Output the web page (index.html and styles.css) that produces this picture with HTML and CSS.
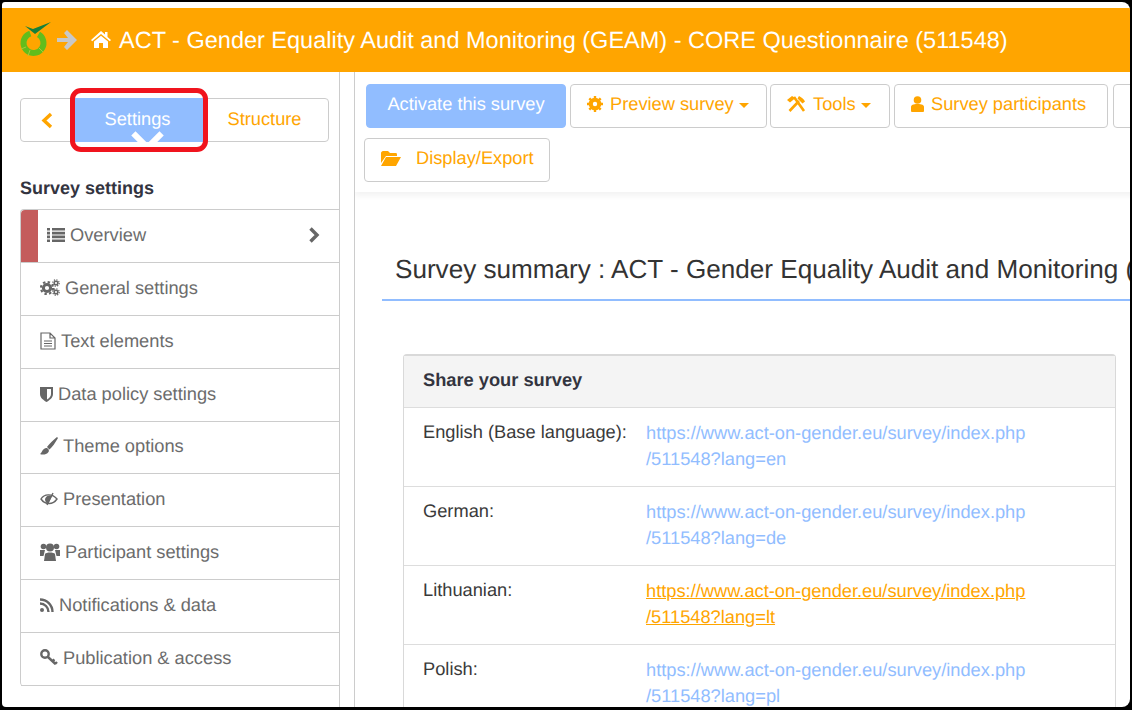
FILE: index.html
```html
<!DOCTYPE html>
<html>
    <head>
        <title>Survey summary</title>
        <link rel="stylesheet" href="styles.css">
    </head>
    <body>
        <div class="window">
            <header class="topbar">
                <svg class="logo" viewBox="0 0 32 36" width="32" height="36">
                    <circle cx="14.500" cy="21" r="10" fill="none" stroke="#62bd1c" stroke-width="6" stroke-dasharray="54 8.800" transform="rotate(-60 14.500 21)"/>
                    <path d="M2 27 L7 25 M9 34 L11 28 M24 30 L20 26" stroke="#a8c83a" stroke-width="1"/>
                    <path d="M6 4 L14 7 L32 0 L16 12 Z" fill="#17803a"/>
                </svg>
                <svg class="arrow" viewBox="0 0 20 20" width="20" height="20">
                    <path d="M0 8 H11 L7 3 L10 0 L20 10 L10 20 L7 17 L11 12 H0 Z" fill="#c8c8c8"/>
                </svg>
                <svg class="home" viewBox="0 0 20 18" width="20" height="18">
                    <path d="M10 0 L14 3.500 V1 H16.500 V6 L20 9 L18.800 10.300 L10 3 L1.200 10.300 L0 9 Z M3 10.500 L10 4.800 L17 10.500 V17 H12 V12 H8 V17 H3 Z" fill="#fff"/>
                </svg>
                <span class="title">ACT - Gender Equality Audit and Monitoring (GEAM) - CORE Questionnaire (511548)</span>
            </header>
            <div class="main">
                <aside class="sidebar">
                    <div class="tabs">
                        <a class="tab-back">
                            <svg viewBox="0 0 12 17" width="12" height="17"><path d="M10 2 L3 8.500 L10 15" fill="none" stroke="#ffa500" stroke-width="3.400"/></svg>
                        </a>
                        <a class="tab-settings">Settings<i class="notch"></i></a>
                        <a class="tab-structure">Structure</a>
                        <span class="highlight"></span>
                    </div>
                    <h2 class="side-title">Survey settings</h2>
                    <ul class="side-menu">
                        <li class="active">
                            <span class="marker"></span>
                            <svg class="ico" viewBox="0 0 18 16" width="18" height="16"><path d="M0 1h3v2.600H0zM5 1h13v2.600H5zM0 4.800h3v2.600H0zM5 4.800h13v2.600H5zM0 8.600h3v2.600H0zM5 8.600h13v2.600H5zM0 12.400h3v2.600H0zM5 12.400h13v2.600H5z" fill="#666"/></svg>
                            Overview
                            <svg class="chev" viewBox="0 0 12 16" width="12" height="16"><path d="M2.500 1.500 L9 8 L2.500 14.500" fill="none" stroke="#666" stroke-width="3.400"/></svg>
                        </li>
                        <li>
                            <svg class="ico" viewBox="0 0 20 17" width="20" height="17"><circle cx="7" cy="9" r="3.600" fill="none" stroke="#666" stroke-width="3"/><circle cx="7" cy="9" r="6" fill="none" stroke="#666" stroke-width="2.200" stroke-dasharray="2.400 2.300"/><circle cx="16" cy="4" r="1.800" fill="none" stroke="#666" stroke-width="1.500"/><circle cx="16" cy="4" r="3.200" fill="none" stroke="#666" stroke-width="1.200" stroke-dasharray="1.300 1.200"/><circle cx="16" cy="13" r="1.800" fill="none" stroke="#666" stroke-width="1.500"/><circle cx="16" cy="13" r="3.200" fill="none" stroke="#666" stroke-width="1.200" stroke-dasharray="1.300 1.200"/></svg>
                            General settings
                        </li>
                        <li>
                            <svg class="ico" viewBox="0 0 16 18" width="16" height="18"><path d="M1 1 H10 L15 6 V17 H1 Z M10 1 V6 H15 M4 9 H12 M4 11.500 H12 M4 14 H12" fill="none" stroke="#666" stroke-width="1.200"/></svg>
                            Text elements
                        </li>
                        <li>
                            <svg class="ico" viewBox="0 0 13 16" width="13" height="16"><path d="M0 1 H13 V8 C13 12 9 14.500 6.500 16 C4 14.500 0 12 0 8 Z" fill="#666"/><path d="M7 3 H11 V8 C11 10.500 9 12.300 7 13.500 Z" fill="#fff"/></svg>
                            Data policy settings
                        </li>
                        <li>
                            <svg class="ico" viewBox="0 0 18 18" width="18" height="18"><path d="M17 0 L18 1 C15 6 12.500 10 9.500 12.500 L7 10 C9.500 7 13 3 17 0 Z M6 11 C8.500 11 9.500 13.500 8.500 15 C6.500 18 2 18 0 17 C2 16 2 12 6 11 Z" fill="#666"/></svg>
                            Theme options
                        </li>
                        <li>
                            <svg class="ico" viewBox="0 0 18 14" width="18" height="14"><path d="M1 7 C4 2 12 1 17 7 C13 13 5 13 1 7 Z" fill="none" stroke="#666" stroke-width="1.400"/><path d="M5 7 C6 3 10 3 12 4 L8 12 C6 11 5 9 5 7 Z" fill="#666"/><path d="M13 1 L7 13" stroke="#666" stroke-width="1.400"/></svg>
                            Presentation
                        </li>
                        <li>
                            <svg class="ico" viewBox="0 0 20 18" width="20" height="18"><circle cx="10" cy="4.500" r="4" fill="#666"/><circle cx="3.500" cy="3.500" r="2.800" fill="#666"/><circle cx="16.500" cy="3.500" r="2.800" fill="#666"/><path d="M5 11 C6 9 14 9 15 11 L16 18 H4 Z" fill="#666"/><path d="M0 7 H5 L3.500 13 H0 Z M15 7 H20 V13 H16.500 Z" fill="#666"/></svg>
                            Participant settings
                        </li>
                        <li>
                            <svg class="ico" viewBox="0 0 14 14" width="14" height="14"><circle cx="2" cy="12" r="2" fill="#666"/><path d="M0 5.500 A8.500 8.500 0 0 1 8.500 14 M0 1.500 A12.500 12.500 0 0 1 12.500 14" fill="none" stroke="#666" stroke-width="2.400"/></svg>
                            Notifications &amp; data
                        </li>
                        <li>
                            <svg class="ico" viewBox="0 0 18 17" width="18" height="17"><circle cx="5" cy="5" r="3.700" fill="none" stroke="#666" stroke-width="2.400"/><path d="M8 8 L15.500 15 M12.500 12 L14.500 10.500 M15 15 L17 13" fill="none" stroke="#666" stroke-width="2.400"/></svg>
                            Publication &amp; access
                        </li>
                    </ul>
                </aside>
                <section class="content">
                    <div class="toolbar">
                        <a class="btn btn-primary">Activate this survey</a>
                        <a class="btn btn-preview">
                            <svg viewBox="0 0 16 16" width="16" height="16"><circle cx="8" cy="8" r="4.500" fill="none" stroke="#ffa500" stroke-width="3.600"/><path d="M8 0V16M0 8H16M2.300 2.300L13.700 13.700M13.700 2.300L2.300 13.700" stroke="#ffa500" stroke-width="2.400"/><circle cx="8" cy="8" r="2.200" fill="#fff"/></svg>
                            Preview survey <i class="caret"></i>
                        </a>
                        <a class="btn btn-tools">
                            <svg viewBox="0 0 19 17" width="19" height="17"><path d="M2.500 15 L12 5 M7 1 L17 15" fill="none" stroke="#ffa500" stroke-width="2.600"/><path d="M0 4 L5 0 L8.500 2 L3 6.500 Z M12 0 C14 1 17 3 18 5.500 L15.500 7.500 L10.500 2.500 Z" fill="#ffa500"/></svg>
                            Tools <i class="caret"></i>
                        </a>
                        <a class="btn btn-users">
                            <svg viewBox="0 0 13 16" width="13" height="16"><circle cx="6.500" cy="4" r="3.800" fill="#ffa500"/><path d="M0 15 V11 C0 9 2 8 6.500 8 C11 8 13 9 13 11 V15 C13 16 12 16 11 16 H2 C1 16 0 16 0 15 Z" fill="#ffa500"/></svg>
                            Survey participants
                        </a>
                        <a class="btn btn-cut"></a>
                        <a class="btn btn-export">
                            <svg viewBox="0 0 20 15" width="20" height="15"><path d="M0 2 C0 1 1 0 2 0 H7 L9 2 H15 C16 2 16 3 16 5 H5 L0 12 Z M5 6 H20 L15 15 H0 Z" fill="#ffa500"/></svg>
                            Display/Export
                        </a>
                    </div>
                    <h1 class="page-title"><span>Survey summary : ACT - Gender Equality Audit and Monitoring (GEAM) - CORE Questionnaire</span></h1>
                    <div class="panel">
                        <div class="panel-head">Share your survey</div>
                        <div class="row">
                            <div class="lang">English (Base language):</div>
                            <div class="link"><a>https://www.act-on-gender.eu/survey/index.php<br>/511548?lang=en</a></div>
                        </div>
                        <div class="row">
                            <div class="lang">German:</div>
                            <div class="link"><a>https://www.act-on-gender.eu/survey/index.php<br>/511548?lang=de</a></div>
                        </div>
                        <div class="row">
                            <div class="lang">Lithuanian:</div>
                            <div class="link"><a class="hover">https://www.act-on-gender.eu/survey/index.php<br>/511548?lang=lt</a></div>
                        </div>
                        <div class="row">
                            <div class="lang">Polish:</div>
                            <div class="link"><a>https://www.act-on-gender.eu/survey/index.php<br>/511548?lang=pl</a></div>
                        </div>
                    </div>
                </section>
            </div>
        </div>
    </body>
</html>
```

FILE: styles.css
```css
html, body {
    margin: 0;
    height: 100%;
    background-color: #000;
    overflow: hidden;
}
body {
    font-family: "Liberation Sans", Arial, sans-serif;
    font-size: 18.25px;
    text-rendering: geometricPrecision;
    padding: 2px 2px 3px 2px;
    box-sizing: border-box;
}
.window {
    height: 100%;
    background-color: #fff;
    border-radius: 3px 8px 8px 4px;
    overflow: hidden;
    padding-top: 6px;
    box-sizing: border-box;
    display: flex;
    flex-direction: column;
}
.topbar {
    background-color: #ffa500;
    height: 64px;
    flex: none;
    display: flex;
    align-items: center;
    color: #fff;
    padding-left: 17px;
}
.logo {
    margin-right: 6px;
}
.arrow {
    margin-right: 14px;
}
.home {
    margin-right: 8px;
}
.title {
    font-size: 23.5px;
    white-space: nowrap;
}
.main {
    flex: 1;
    display: flex;
    min-height: 0;
}
.sidebar {
    width: 338px;
    flex: none;
    box-sizing: border-box;
    padding: 26px 0 0 18px;
    border-right: 1px solid #ccc;
    color: #666;
}
.tabs {
    position: relative;
    display: flex;
    height: 44px;
    width: 309px;
    box-sizing: border-box;
    border: 1px solid #ccc;
    border-radius: 4px;
}
.tabs a {
    display: flex;
    align-items: center;
    justify-content: center;
}
.tab-back {
    width: 53px;
    padding-right: 2px;
    box-sizing: border-box;
}
.tab-settings {
    position: relative;
    width: 129px;
    box-sizing: border-box;
    padding: 0 2px 2px 0;
    background-color: #91bdff;
    color: #fff;
    margin-top: -1px;
    margin-bottom: -1px;
}
.tab-structure {
    flex: 1;
    padding: 0 2px 2px 0;
    color: #ffa500;
}
.notch {
    position: absolute;
    left: 62px;
    bottom: -5px;
    width: 23px;
    height: 23px;
    box-sizing: border-box;
    border-right: 6px solid #fff;
    border-bottom: 6px solid #fff;
    transform: rotate(45deg);
}
.highlight {
    position: absolute;
    left: 49px;
    top: -11px;
    width: 138px;
    height: 64px;
    box-sizing: border-box;
    border: 5px solid #f0141e;
    border-radius: 11px;
}
.side-title {
    margin: 36px 0 11px 0;
    font-size: 18px;
    line-height: 20px;
    color: #33343f;
}
.side-menu {
    list-style-type: none;
    margin: 0;
    padding: 0;
    border-top: 1px solid #ccc;
    border-left: 1px solid #ccc;
    border-radius: 4px 0 0 4px;
}
.side-menu li {
    display: flex;
    align-items: center;
    gap: 5px;
    height: 52.875px;
    box-sizing: border-box;
    padding: 0 0 2px 19px;
    border-bottom: 1px solid #ccc;
    color: #6c6c6c;
    white-space: nowrap;
}
.side-menu li.active {
    position: relative;
    padding-left: 26px;
}
.marker {
    position: absolute;
    left: 0;
    top: 0;
    bottom: 0;
    width: 17px;
    background-color: #c45c5c;
    border-top-left-radius: 4px;
}
.chev {
    margin-left: auto;
    margin-right: 19px;
}
.content {
    flex: 1;
    min-width: 0;
    overflow: hidden;
    margin-left: 14px;
    border-left: 1px solid #ccc;
}
.toolbar {
    display: flex;
    flex-wrap: wrap;
    align-content: flex-start;
    gap: 10px 4px;
    height: 108px;
    padding: 12px 0 0 9px;
    width: 790px;
    box-shadow: 0 4px 6px rgba(0, 0, 0, 0.05);
}
.btn {
    display: flex;
    align-items: center;
    gap: 7px;
    height: 44px;
    box-sizing: border-box;
    padding: 0 0 4px 16px;
    border: 1px solid #ccc;
    border-radius: 4px;
    color: #ffa500;
    background-color: #fff;
    white-space: nowrap;
}
.btn svg {
    flex: none;
}
.btn-primary {
    background-color: #91bdff;
    border-color: #91bdff;
    color: #fff;
    margin-left: 2px;
    width: 200px;
    padding: 0 0 4px 0;
    justify-content: center;
}
.btn-preview {
    width: 197px;
}
.btn-tools {
    width: 120px;
    margin-left: -1px;
}
.btn-users {
    width: 214px;
}
.btn-cut {
    width: 40px;
    margin-left: 1px;
    margin-right: -40px;
}
.btn-export {
    width: 186px;
    gap: 15px;
}
.caret {
    border-top: 5px solid #ffa500;
    border-left: 5px solid transparent;
    border-right: 5px solid transparent;
    margin-left: -2px;
    margin-top: 2px;
}
.page-title {
    margin: 60px 0 0 27px;
    padding: 0 0 13px 13px;
    border-bottom: 2px solid #91bdff;
    font-size: 26.1px;
    line-height: 34px;
    font-weight: 400;
    color: #333;
    white-space: nowrap;
    overflow: hidden;
}
.panel {
    margin: 53px 14px 0 48px;
    border: 1px solid #d9d9d9;
    border-top-width: 2px;
    border-bottom: none;
    border-radius: 4px 4px 0 0;
}
.panel-head {
    height: 52px;
    box-sizing: border-box;
    line-height: 48px;
    background-color: #f4f4f4;
    padding-left: 19px;
    border-bottom: 1px solid #ddd;
    font-weight: 700;
    color: #33343f;
}
.row {
    display: flex;
    height: 79px;
    padding-top: 11px;
    box-sizing: border-box;
    border-bottom: 1px solid #ddd;
    line-height: 26px;
}
.lang {
    width: 242px;
    padding-left: 19px;
    box-sizing: border-box;
    color: #3a3a3a;
}
.link {
    padding-top: 1px;
}
.link a {
    color: #91bdff;
}
.link a.hover {
    color: #ffa500;
    text-decoration: underline;
}
```
